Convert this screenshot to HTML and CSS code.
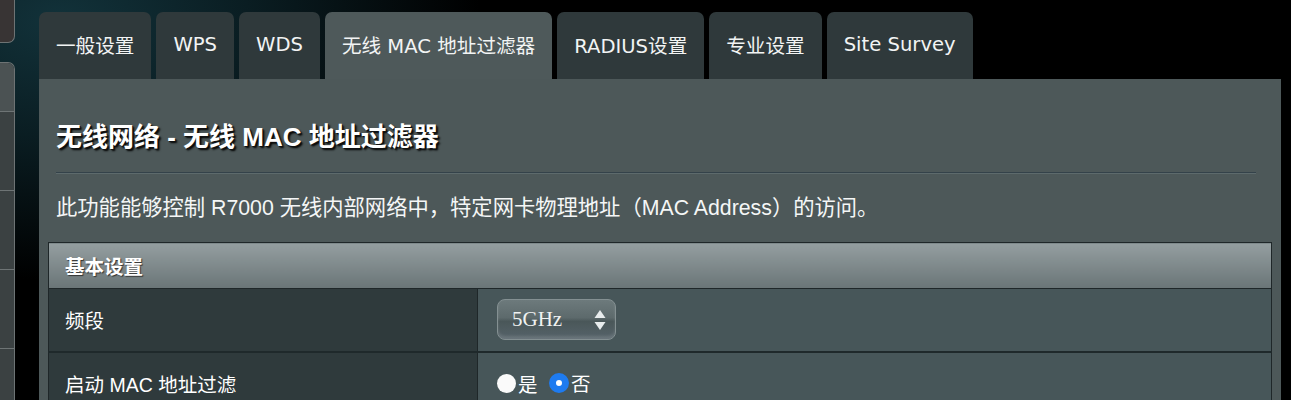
FILE: index.html
```html
<!DOCTYPE html>
<html lang="zh-CN">
<head>
    <meta charset="UTF-8">
    <meta name="viewport" content="width=device-width, initial-scale=1.0">
    <title>无线 MAC 地址过滤器</title>
    <link rel="stylesheet" href="styles.css">
</head>
<body>

    <div class="page">
        <div class="side">
            <div class="side-top"></div>
            <div class="side-menu">
                <div class="side-item first"></div>
                <div class="side-item"></div>
                <div class="side-item"></div>
                <div class="side-item"></div>
                <div class="side-item"></div>
            </div>
        </div>

        <div class="content">
            <ul class="tabs">
                <li><a href="#">一般设置</a></li>
                <li><a href="#">WPS</a></li>
                <li><a href="#">WDS</a></li>
                <li class="active"><a href="#">无线 MAC 地址过滤器</a></li>
                <li><a href="#">RADIUS设置</a></li>
                <li><a href="#">专业设置</a></li>
                <li><a href="#">Site Survey</a></li>
            </ul>

            <div class="panel">
                <h2 class="title">无线网络 - 无线 MAC 地址过滤器</h2>
                <div class="divider"></div>
                <p class="desc">此功能能够控制 R7000 无线内部网络中，特定网卡物理地址（MAC Address）的访问。</p>

                <table class="form-table">
                    <thead>
                        <tr><th colspan="2">基本设置</th></tr>
                    </thead>
                    <tbody>
                        <tr>
                            <td class="label">频段</td>
                            <td class="value">
                                <div class="select">
                                    <span>5GHz</span>
                                    <svg width="12" height="22" viewBox="0 0 12 22">
                                        <path d="M6 1 L11.5 9 L0.5 9 Z" fill="#e8eced"/>
                                        <path d="M6 21 L11.5 13 L0.5 13 Z" fill="#e8eced"/>
                                    </svg>
                                </div>
                            </td>
                        </tr>
                        <tr>
                            <td class="label">启动 MAC 地址过滤</td>
                            <td class="value">
                                <label class="radio"><span class="dot"></span>是</label>
                                <label class="radio"><span class="dot on"></span>否</label>
                            </td>
                        </tr>
                    </tbody>
                </table>
            </div>
        </div>
    </div>

</body>
</html>
```

FILE: styles.css
```css
* {
    padding: 0;
    margin: 0;
    box-sizing: border-box;
}

body {
    background-color: #000;
    background-image: radial-gradient(ellipse 420px 260px at 60px 20px, #12323a 0%, #0a1d22 45%, #000 100%);
    font-family: 'Liberation Sans', 'Noto Sans CJK SC', sans-serif;
    color: #fff;
    height: 400px;
    overflow: hidden;
}

.page {
    display: flex;
    align-items: flex-start;
}

/* left menu, mostly off screen */
.side {
    width: 15px;
    display: flex;
    flex-direction: column;
}

.side-top {
    height: 43px;
    background-color: #383434;
    border-right: 1px solid #6d7374;
    border-bottom: 1px solid #6d7374;
    border-bottom-right-radius: 7px;
}

.side-menu {
    margin-top: 19px;
    border-right: 1px solid #6d7374;
    border-top: 1px solid #6d7374;
    border-top-right-radius: 7px;
    overflow: hidden;
}

.side-item {
    height: 79px;
    background-color: #3b4142;
    border-bottom: 1px solid #6e7475;
}

.side-item.first {
    height: 49px;
    background-color: #4b5253;
}

.content {
    margin-left: 24px;
    width: 1242px;
    padding-top: 12px;
}

.tabs {
    list-style: none;
    display: flex;
    gap: 5px;
}

.tabs li {
    height: 67px;
    background-color: #2f393b;
    border-radius: 7px 7px 0 0;
    display: flex;
    align-items: center;
}

.tabs li a {
    display: block;
    padding: 0 17px 2px;
    color: #f2f4f4;
    text-decoration: none;
    font-family: 'DejaVu Sans', 'Noto Sans CJK SC', sans-serif;
    font-size: 19.6px;
}

.tabs li.active {
    background-color: #4e595a;
}

.panel {
    background-color: #4d5859;
    padding: 43px 9px 60px;
}

.title {
    font-size: 26px;
    line-height: 30px;
    font-weight: bold;
    padding: 0 8px;
    text-shadow: 1px 1px 0 #111, 2px 2px 2px #000;
}

.divider {
    margin: 20px 16px 0 8px;
    height: 2px;
    background-color: #34424a;
    border-bottom: 1px solid #5d6a6c;
}

.desc {
    margin-top: 20px;
    padding: 0 8px;
    font-size: 21.3px;
    line-height: 28px;
    color: #f4f6f6;
}

.form-table {
    margin-top: 20px;
    width: 100%;
    border-collapse: collapse;
    border: 1px solid #1f2729;
}

.form-table th {
    height: 46px;
    text-align: left;
    padding: 0 16px;
    font-size: 19.5px;
    font-weight: bold;
    background-image: linear-gradient(#949ea0, #6a7577);
    text-shadow: 1px 1px 1px #333;
    border-bottom: 1px solid #1f2729;
}

.form-table td {
    height: 63px;
    border-bottom: 2px solid #1f292b;
    font-size: 19.5px;
}

.form-table td.label {
    width: 429px;
    padding: 0 16px;
    background-color: #2f3a3c;
    border-right: 1px solid #1f2729;
}

.form-table td.value {
    padding: 0 19px;
    background-color: #475659;
}

.select {
    width: 119px;
    height: 41px;
    border: 1px solid #849092;
    border-radius: 8px;
    background-image: linear-gradient(#6d7a7c 0%, #5d6a6c 45%, #4a5759 55%, #56636a 100%);
    box-shadow: inset 0 -3px 3px rgba(255, 255, 255, 0.12);
    display: flex;
    align-items: center;
    justify-content: space-between;
    padding: 0 9px 0 14px;
}

.select span {
    font-family: 'Liberation Serif', serif;
    font-size: 21px;
    color: #f0f2f2;
}

.radio {
    display: inline-flex;
    align-items: center;
    margin-right: 6px;
    color: #fff;
}

.dot {
    width: 19px;
    height: 19px;
    border-radius: 50%;
    background-color: #fafafa;
    margin-right: 2px;
}

.dot.on {
    width: 20px;
    height: 20px;
    border: 7px solid #1e7bf0;
    background-color: #fff;
}
```
